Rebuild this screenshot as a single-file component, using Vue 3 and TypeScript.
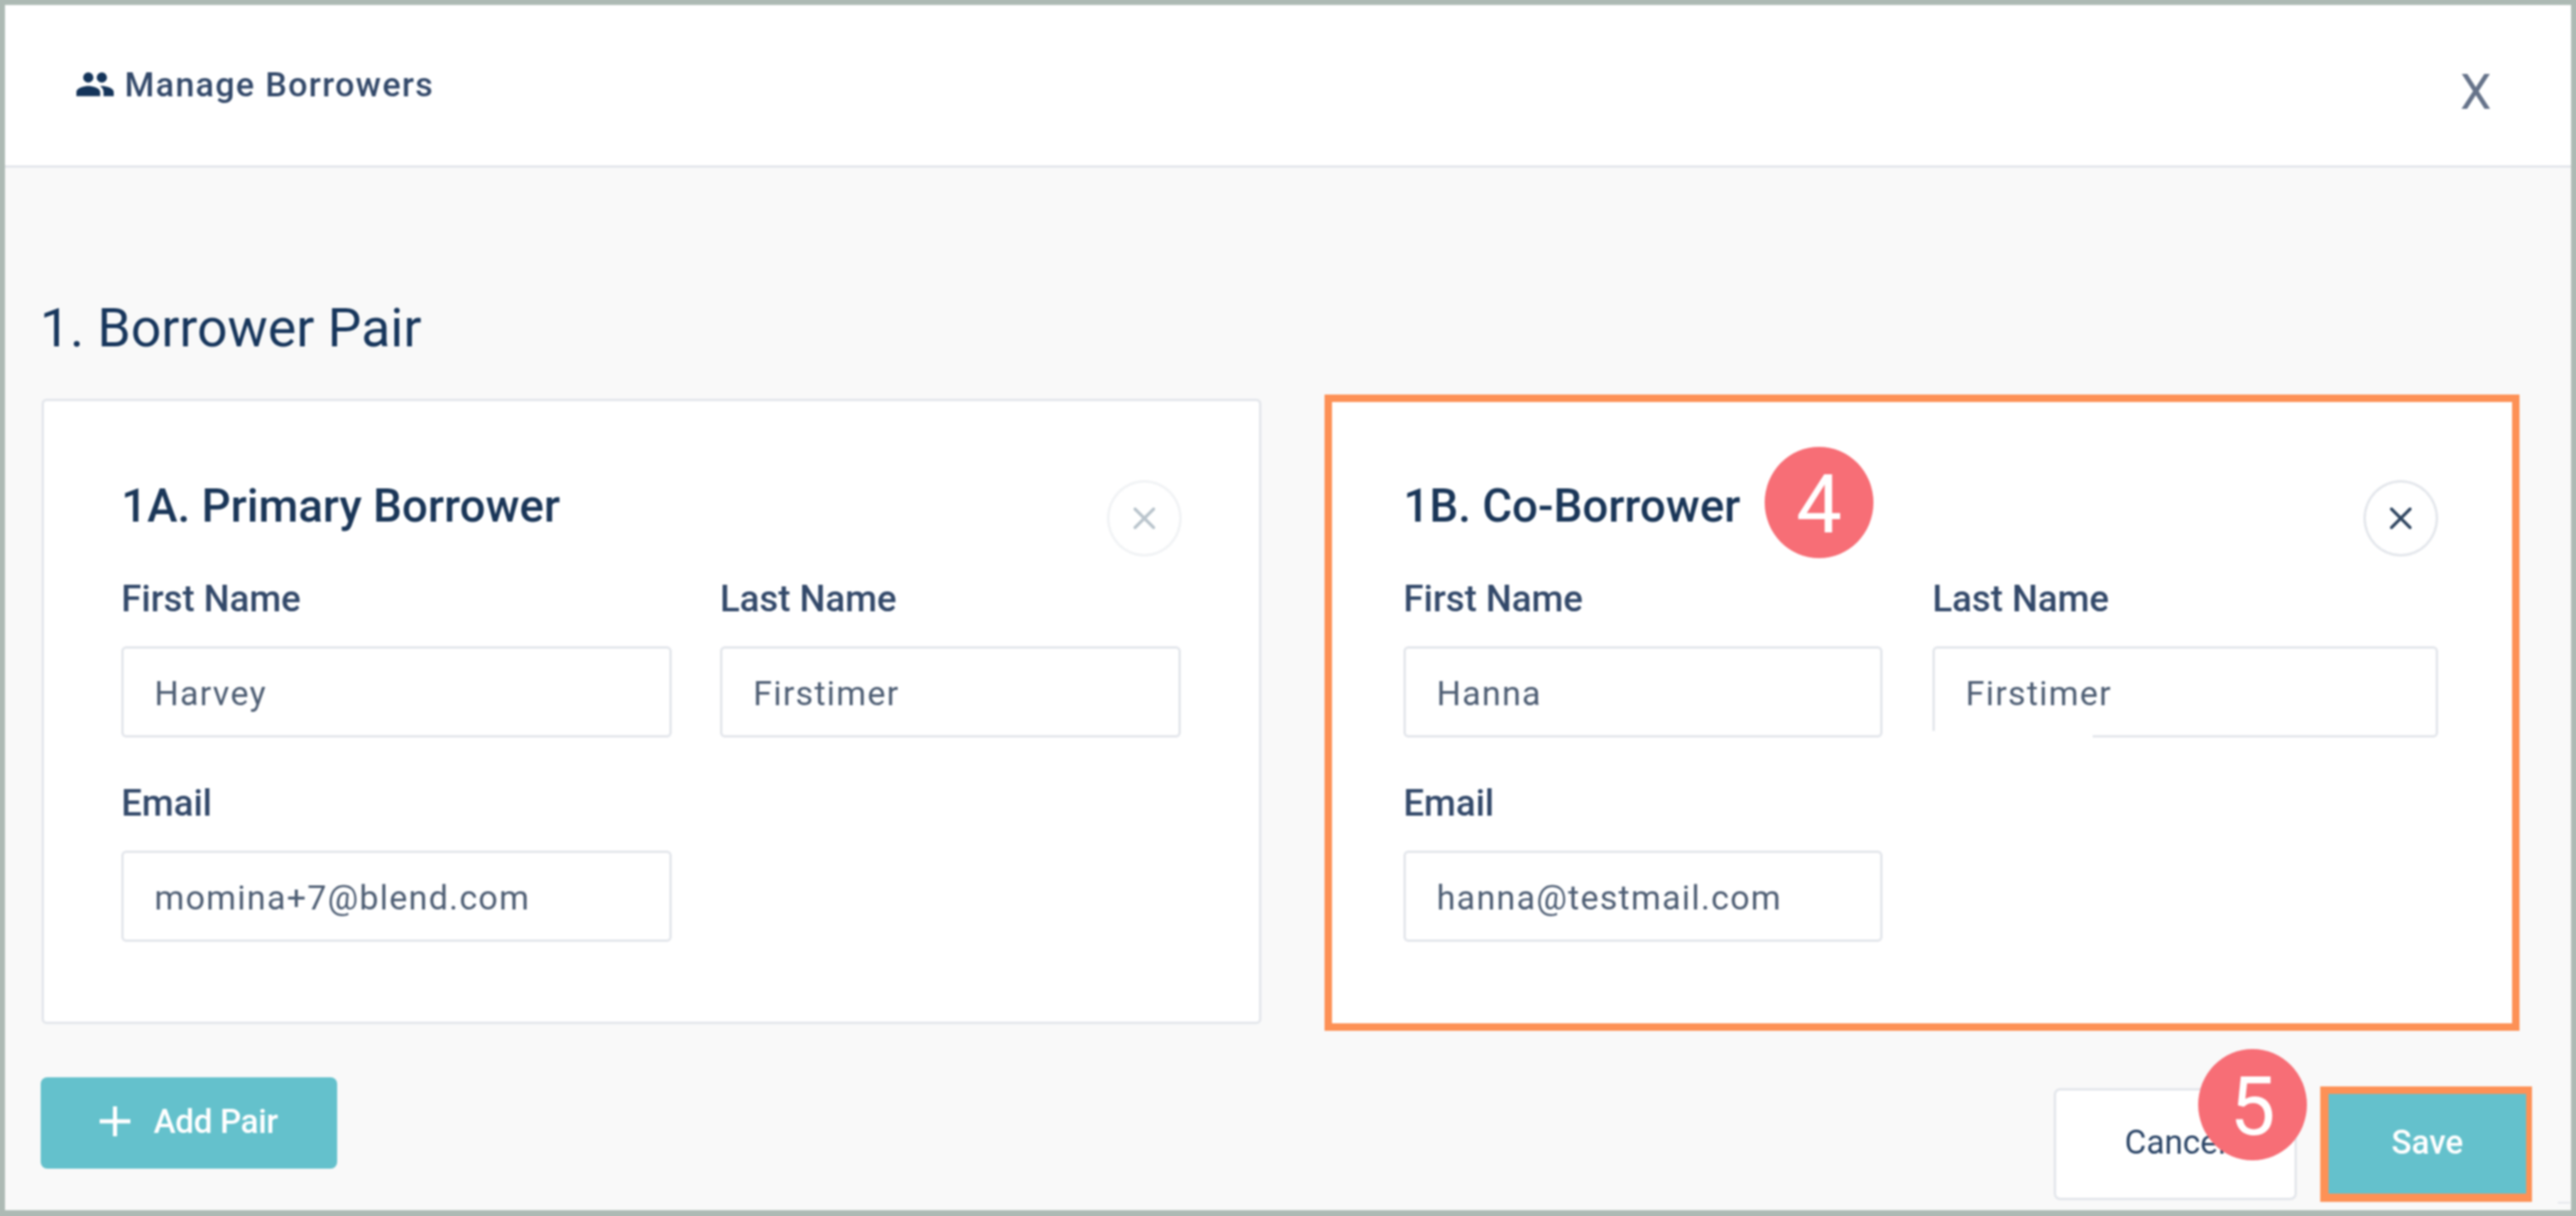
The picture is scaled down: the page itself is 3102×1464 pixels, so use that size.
<script setup lang="ts">
interface Field {
  label: string
  value: string
  masked?: boolean
}
const primary: Field[] = [
  { label: 'First Name', value: 'Harvey' },
  { label: 'Last Name', value: 'Firstimer' },
  { label: 'Email', value: 'momina+7@blend.com' },
]
const co: Field[] = [
  { label: 'First Name', value: 'Hanna' },
  { label: 'Last Name', value: 'Firstimer', masked: true },
  { label: 'Email', value: 'hanna@testmail.com' },
]
</script>

<template>
  <div class="frame">
    <header class="header">
      <div class="title">
        <svg class="people" viewBox="0 0 24 24" aria-hidden="true">
          <path d="M16 11c1.66 0 2.99-1.34 2.99-3S17.66 5 16 5c-1.66 0-3 1.34-3 3s1.34 3 3 3zm-8 0c1.66 0 2.99-1.34 2.99-3S9.66 5 8 5C6.34 5 5 6.34 5 8s1.34 3 3 3zm0 2c-2.33 0-7 1.17-7 3.5V19h14v-2.5c0-2.33-4.67-3.5-7-3.5zm8 0c-.29 0-.62.02-.97.05 1.16.84 1.97 1.97 1.97 3.45V19h6v-2.5c0-2.33-4.67-3.5-7-3.5z" />
        </svg>
        <span>Manage Borrowers</span>
      </div>
      <span class="dismiss">X</span>
    </header>

    <main class="body">
      <h1 class="heading">1. Borrower Pair</h1>
      <div class="pairs">
        <section class="card primary">
          <div class="card-head">
            <h2>1A. Primary Borrower</h2>
            <span class="close faded">
              <svg viewBox="0 0 28 28" aria-hidden="true"><path d="M2 2 26 26M26 2 2 26" /></svg>
            </span>
          </div>
          <div class="fields">
            <div v-for="f in primary" :key="f.label" class="field">
              <label>{{ f.label }}</label>
              <div class="input">{{ f.value }}</div>
            </div>
          </div>
        </section>

        <section class="card co">
          <div class="card-head">
            <h2>1B. Co-Borrower</h2>
            <span class="close">
              <svg viewBox="0 0 28 28" aria-hidden="true"><path d="M2 2 26 26M26 2 2 26" /></svg>
            </span>
          </div>
          <div class="fields">
            <div v-for="f in co" :key="f.label" class="field">
              <label>{{ f.label }}</label>
              <div class="input">
                {{ f.value }}
                <span v-if="f.masked" class="mask"></span>
              </div>
            </div>
          </div>
          <span class="badge badge-four">4</span>
        </section>
      </div>

      <footer class="footer">
        <button class="btn add" type="button">
          <svg class="plus" viewBox="0 0 37 36" aria-hidden="true"><path d="M0 18H37M18.500 0V36" /></svg>
          <span>Add Pair</span>
        </button>
        <div class="actions">
          <button class="btn cancel" type="button">Cancel</button>
          <button class="btn save" type="button">Save</button>
          <span class="badge badge-five">5</span>
        </div>
      </footer>
    </main>
  </div>
</template>

<style>
html,
body {
  margin: 0;
  background: #adbab4;
}
</style>

<style scoped>
.frame {
  box-sizing: border-box;
  width: 3102px;
  height: 1464px;
  border-style: solid;
  border-color: #adbab4;
  border-width: 6px 6px 7px 6px;
  display: flex;
  flex-direction: column;
  overflow: hidden;
  font-family: Roboto, "Liberation Sans", sans-serif;
  color: #1f3a5c;
  filter: blur(0.8px);
}
.header {
  box-sizing: border-box;
  height: 196px;
  flex: none;
  background: #fff;
  border-bottom: 3px solid #e4e7ec;
  display: flex;
  justify-content: space-between;
  align-items: center;
  padding: 0 96px 0 84px;
}
.title {
  display: flex;
  align-items: center;
  gap: 11px;
  font-size: 41px;
  font-weight: 500;
  letter-spacing: 1.6px;
  color: #33496a;
  margin-top: -2px;
}
.people {
  width: 49px;
  height: 49px;
  fill: #14345a;
}
.dismiss {
  font-size: 60px;
  font-weight: 400;
  color: #66738a;
  margin-top: 16px;
  line-height: 1;
}
.body {
  flex: 1;
  background: #f9f9f9;
  padding: 0 47px 0 44px;
  position: relative;
  display: flex;
  flex-direction: column;
}
.body::after {
  content: "";
  position: absolute;
  right: 1px;
  bottom: 8px;
  width: 15px;
  height: 2px;
  background: #e4e7ec;
}
.heading {
  margin: 148px 0 0 -2px;
  height: 125px;
  font-size: 64.500px;
  line-height: 91px;
  font-weight: 450;
  color: #17365c;
}
.pairs {
  display: flex;
  gap: 76px;
  align-items: flex-start;
  margin-right: 15px;
}
.card {
  box-sizing: border-box;
  background: #fff;
  position: relative;
}
.primary {
  width: 1469px;
  height: 753px;
  margin-top: 5px;
  border: 3px solid #e4e7ec;
  border-radius: 6px;
  padding: 95px 93px 0;
}
.co {
  width: 1439px;
  height: 766px;
  border: 9px solid #fd9156;
  padding: 94px 89px 0 86px;
}
.card-head {
  display: flex;
  justify-content: space-between;
  align-items: flex-start;
  height: 94px;
}
.card-head h2 {
  margin: 0;
  font-size: 55px;
  line-height: 62px;
  font-weight: 500;
  color: #1a3658;
}
.close {
  box-sizing: border-box;
  width: 90px;
  height: 92px;
  border-radius: 50%;
  border: 3px solid #e4e7ec;
  display: flex;
  align-items: center;
  justify-content: center;
}
.close svg {
  width: 26px;
  height: 26px;
  fill: none;
  stroke: #2f4560;
  stroke-width: 4;
  stroke-linecap: round;
}
.close.faded {
  border-color: #f1f3f5;
}
.close.faded svg {
  stroke: #b9c4cc;
}
.fields {
  display: grid;
  row-gap: 52px;
  margin-top: 22px;
}
.primary .fields {
  grid-template-columns: 663px 555px;
  column-gap: 58px;
}
.co .fields {
  grid-template-columns: 577px 609px;
  column-gap: 60px;
}
.field label {
  display: block;
  height: 84px;
  font-size: 44px;
  line-height: 54px;
  font-weight: 500;
  color: #33496a;
}
.input {
  box-sizing: border-box;
  height: 110px;
  background: #fff;
  border: 3px solid #e4e7ec;
  border-radius: 6px;
  padding: 3px 37px 0;
  display: flex;
  align-items: center;
  font-size: 41px;
  letter-spacing: 1.5px;
  color: #4d5d73;
  position: relative;
}
.mask {
  position: absolute;
  left: -4px;
  bottom: -4px;
  width: 194px;
  height: 9px;
  background: #fff;
}
.badge {
  position: absolute;
  width: 131px;
  height: 134px;
  border-radius: 50%;
  background: #f76e76;
  color: #fff;
  font-size: 98px;
  font-weight: 400;
  line-height: 140px;
  text-align: center;
}
.badge-four {
  left: 521px;
  top: 54px;
}
.badge-five {
  left: 174px;
  top: -45px;
}
.footer {
  display: flex;
  justify-content: space-between;
  align-items: flex-start;
  margin-top: 56px;
}
.btn {
  box-sizing: border-box;
  font-family: inherit;
  font-size: 40px;
  font-weight: 500;
  padding: 0 0 4px;
  margin: 0;
}
.add {
  width: 357px;
  height: 110px;
  margin-left: -1px;
  background: #64c1cc;
  color: #fff;
  border: 0;
  border-radius: 8px;
  display: flex;
  align-items: center;
  gap: 28px;
  padding-left: 71px;
  letter-spacing: -0.4px;
}
.plus {
  width: 37px;
  height: 36px;
  fill: none;
  stroke: #fff;
  stroke-width: 5;
}
.actions {
  position: relative;
  display: flex;
  align-items: center;
  gap: 28px;
  margin-top: 11px;
}
.cancel {
  width: 293px;
  height: 135px;
  background: #fff;
  border: 3px solid #e4e7ec;
  border-radius: 8px;
  font-weight: 450;
  color: #2a4466;
}
.save {
  width: 255px;
  height: 139px;
  background: #64c1cc;
  border-style: solid;
  border-color: #fd9156;
  border-width: 9px 7px 10px 10px;
  color: #fff;
}
</style>
